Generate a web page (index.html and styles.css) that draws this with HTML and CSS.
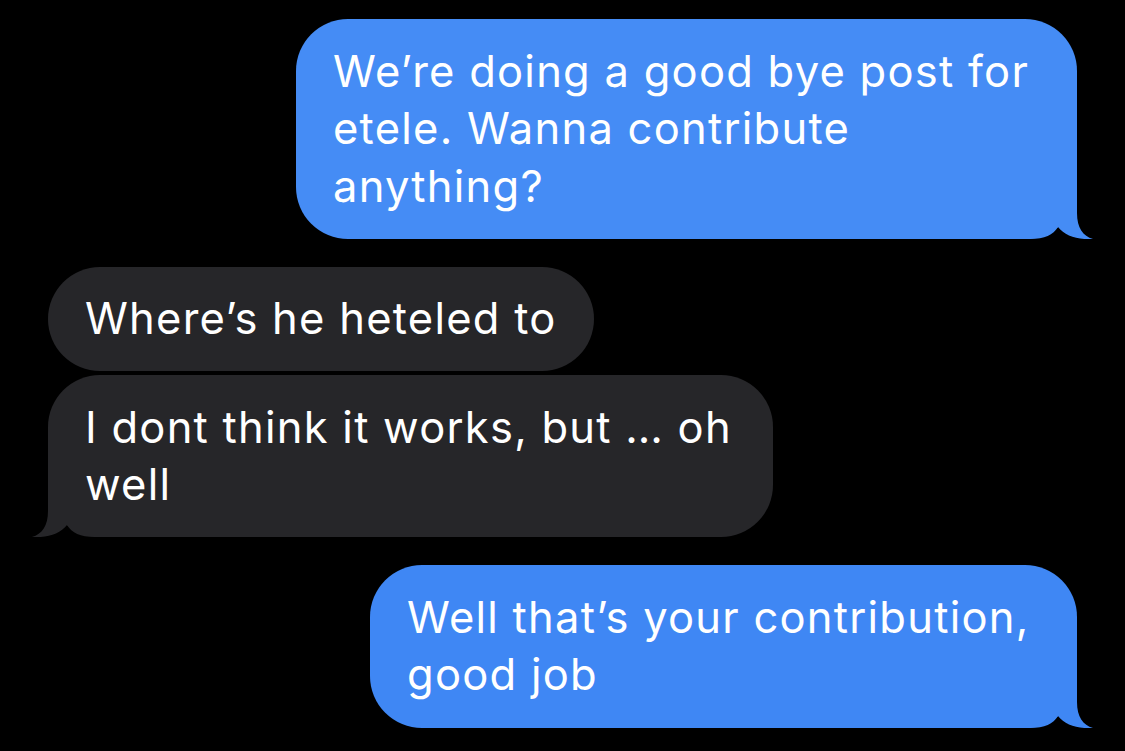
FILE: index.html
```html
<!DOCTYPE html>
<html>
<head>
<meta charset="utf-8">
<link rel="stylesheet" href="styles.css">
</head>
<body>
<div class="thread">
  <div class="bubble out b1">We’re doing a good bye post for<br>etele. Wanna contribute<br>anything?
    <svg class="tail tail-out" width="70" height="60" viewBox="0 0 70 60"><path d="M0 60 L6 60 C21 60 29 56 34 48 C41 57 54 61 69 60 C59 57 53 49 53 34 L53 0 L0 0 Z"/></svg>
  </div>
  <div class="bubble in b2">Where’s he heteled to</div>
  <div class="bubble in b3">I dont think it works, but … oh<br>well
    <svg class="tail tail-in" width="70" height="60" viewBox="0 0 70 60"><path d="M0 60 L6 60 C21 60 29 56 34 48 C41 57 54 61 69 60 C59 57 53 49 53 34 L53 0 L0 0 Z"/></svg>
  </div>
  <div class="bubble out b4">Well that’s your contribution,<br>good job
    <svg class="tail tail-out" width="70" height="60" viewBox="0 0 70 60"><path d="M0 60 L6 60 C21 60 29 56 34 48 C41 57 54 61 69 60 C59 57 53 49 53 34 L53 0 L0 0 Z"/></svg>
  </div>
</div>
</body>
</html>
```
FILE: styles.css
```css
html, body {
  margin: 0;
  padding: 0;
  background: #000;
}
body {
  width: 1125px;
  height: 751px;
  overflow: hidden;
  font-family: Inter, "Noto Sans", sans-serif;
  color: #fff;
}
.thread {
  display: flex;
  flex-direction: column;
  padding: 19px 48px 0 48px;
}
.bubble {
  position: relative;
  isolation: isolate;
  box-sizing: border-box;
  font-size: 43.5px;
  letter-spacing: 1.25px;
  line-height: 57.5px;
  padding: 23.5px 37px 23.5px 37px;
  border-radius: 52px;
  white-space: nowrap;
}
.out {
  align-self: flex-end;
  background: #458cf5;
}
.in {
  align-self: flex-start;
  background: #262629;
}
.b1 { width: 781px; }
.b2 { margin-top: 28px; }
.b3 { width: 725px; margin-top: 4px; }
.b3 .ell { letter-spacing: 0; }
.b4 { width: 707px; margin-top: 28px; background: #3f87f4; padding-bottom: 24.5px; }
.tail {
  position: absolute;
  bottom: 0;
  z-index: -1;
}
.tail-out {
  right: -17px;
}
.b1 .tail path { fill: #458cf5; }
.b4 .tail path { fill: #3f87f4; }
.tail-in {
  left: -17px;
  transform: scaleX(-1);
}
.tail-in path { fill: #262629; }
```
